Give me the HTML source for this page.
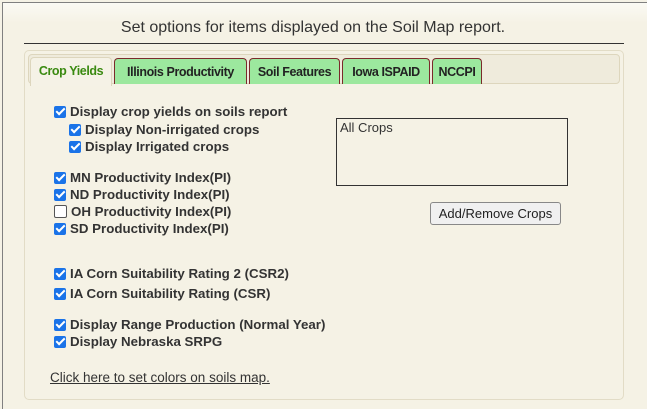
<!DOCTYPE html>
<html><head><style>
html,body{margin:0;width:647px;height:409px;overflow:hidden;}
body{background:#f5f2e6;font-family:"Liberation Sans",Arial,sans-serif;position:relative;}
.frame{position:absolute;left:2px;top:2px;width:650px;height:410px;border-left:1px solid #808080;border-top:1px solid #808080;background:linear-gradient(#fbfaf4 0px,#f5f2e5 20px,#f5f2e5);}
.title{position:absolute;left:0;width:626px;top:19px;text-align:center;font-size:16px;color:#333;}
.hr{position:absolute;left:24px;top:43px;width:600px;height:1px;background:#333;}
.panel{position:absolute;left:24px;top:50px;width:598px;height:348px;border:1px solid #e2dcc6;border-radius:5px;}
.tabbar{position:absolute;left:28px;top:54px;width:590px;height:28px;border:1px solid #ddd6bd;border-radius:4px;background:#efebdc;}
.tab{position:absolute;top:58px;height:25px;line-height:27px;font-size:12.5px;font-weight:bold;color:#222;background:#9ce89e;border:1px solid #7a2b2b;border-bottom:none;border-radius:4px 4px 0 0;text-align:center;letter-spacing:-0.4px;}
.tab.act{background:#f5f2e6;color:#3a8a10;border-color:#ddd6bd;top:57px;height:28px;}
.cb{position:absolute;font-size:13.3px;font-weight:bold;color:#333;display:flex;align-items:center;}
.box{width:12px;height:12px;background:#1a73e8;border-radius:2px;margin-right:4px;position:relative;}
.box:after{content:"";position:absolute;left:3.5px;top:0.5px;width:3px;height:7px;border:solid #fff;border-width:0 2px 2px 0;transform:rotate(45deg);}
.box.off{background:#fff;border:1px solid #555;width:11px;height:11px;}
.box.off:after{display:none}
.list{position:absolute;left:336px;top:118px;font-size:13px;color:#333;padding:1px 3px;box-sizing:border-box;width:232px;height:68px;border:1px solid #333;}
.btn{position:absolute;left:430px;top:202px;width:131px;height:23px;border:1px solid #888;border-radius:3px;background:#f0f0f0;font-size:13px;color:#222;text-align:center;line-height:22px;box-sizing:border-box;}
.link{position:absolute;left:50px;top:370px;font-size:13.5px;color:#333;text-decoration:underline;}
</style></head><body>
<div class="frame"></div>
<div class="title">Set options for items displayed on the Soil Map report.</div>
<div class="hr"></div>
<div class="panel"></div>
<div class="tabbar"></div>
<div class="tab act" style="left:30px;width:80px;">Crop Yields</div>
<div class="tab" style="left:114px;width:131px;">Illinois Productivity</div>
<div class="tab" style="left:249px;width:89px;">Soil Features</div>
<div class="tab" style="left:342px;width:86px;">Iowa ISPAID</div>
<div class="tab" style="left:432px;width:48px;">NCCPI</div>

<div class="cb" style="left:54px;top:104px"><span class="box"></span>Display crop yields on soils report</div>
<div class="cb" style="left:69px;top:122px"><span class="box"></span>Display Non-irrigated crops</div>
<div class="cb" style="left:69px;top:139px"><span class="box"></span>Display Irrigated crops</div>
<div class="cb" style="left:54px;top:170px"><span class="box"></span>MN Productivity Index(PI)</div>
<div class="cb" style="left:54px;top:187px"><span class="box"></span>ND Productivity Index(PI)</div>
<div class="cb" style="left:54px;top:204px"><span class="box off"></span>OH Productivity Index(PI)</div>
<div class="cb" style="left:54px;top:221px"><span class="box"></span>SD Productivity Index(PI)</div>
<div class="cb" style="left:54px;top:266px"><span class="box"></span>IA Corn Suitability Rating 2 (CSR2)</div>
<div class="cb" style="left:54px;top:286px"><span class="box"></span>IA Corn Suitability Rating (CSR)</div>
<div class="cb" style="left:54px;top:317px"><span class="box"></span>Display Range Production (Normal Year)</div>
<div class="cb" style="left:54px;top:334px"><span class="box"></span>Display Nebraska SRPG</div>

<div class="list">All Crops</div>
<div class="btn">Add/Remove Crops</div>
<div class="link">Click here to set colors on soils map.</div>
</body></html>
